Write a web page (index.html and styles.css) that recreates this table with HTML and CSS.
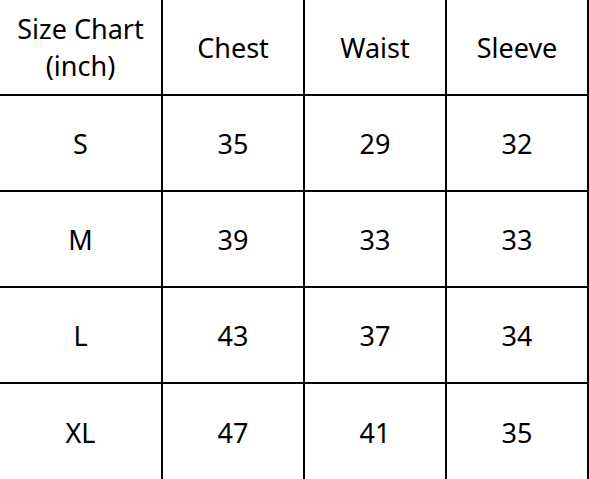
FILE: index.html
```html
<!DOCTYPE html>
<html>
<head>
<meta charset="utf-8">
<link rel="stylesheet" href="styles.css">
</head>
<body>
<div class="chart">
  <div class="cell head first">Size Chart<br>(inch)</div>
  <div class="cell head">Chest</div>
  <div class="cell head">Waist</div>
  <div class="cell head">Sleeve</div>

  <div class="cell">S</div>
  <div class="cell">35</div>
  <div class="cell">29</div>
  <div class="cell">32</div>

  <div class="cell">M</div>
  <div class="cell">39</div>
  <div class="cell">33</div>
  <div class="cell">33</div>

  <div class="cell">L</div>
  <div class="cell">43</div>
  <div class="cell">37</div>
  <div class="cell">34</div>

  <div class="cell last">XL</div>
  <div class="cell last">47</div>
  <div class="cell last">41</div>
  <div class="cell last">35</div>
</div>
</body>
</html>
```
FILE: styles.css
```css
html, body {
  margin: 0;
  padding: 0;
  background: #fff;
}
body {
  width: 589px;
  height: 479px;
  overflow: hidden;
}
.chart {
  display: grid;
  grid-template-columns: 163px 142px 142px 142px;
  grid-template-rows: repeat(5, 96px);
  font-family: "Noto Sans", "Open Sans", sans-serif;
  font-size: 27px;
  color: #000;
}
.cell {
  box-sizing: border-box;
  border-right: 2px solid #000;
  border-bottom: 2px solid #000;
  display: flex;
  align-items: center;
  justify-content: center;
  text-align: center;
  line-height: 37px;
}
.cell.last {
  border-bottom: none;
}
```
